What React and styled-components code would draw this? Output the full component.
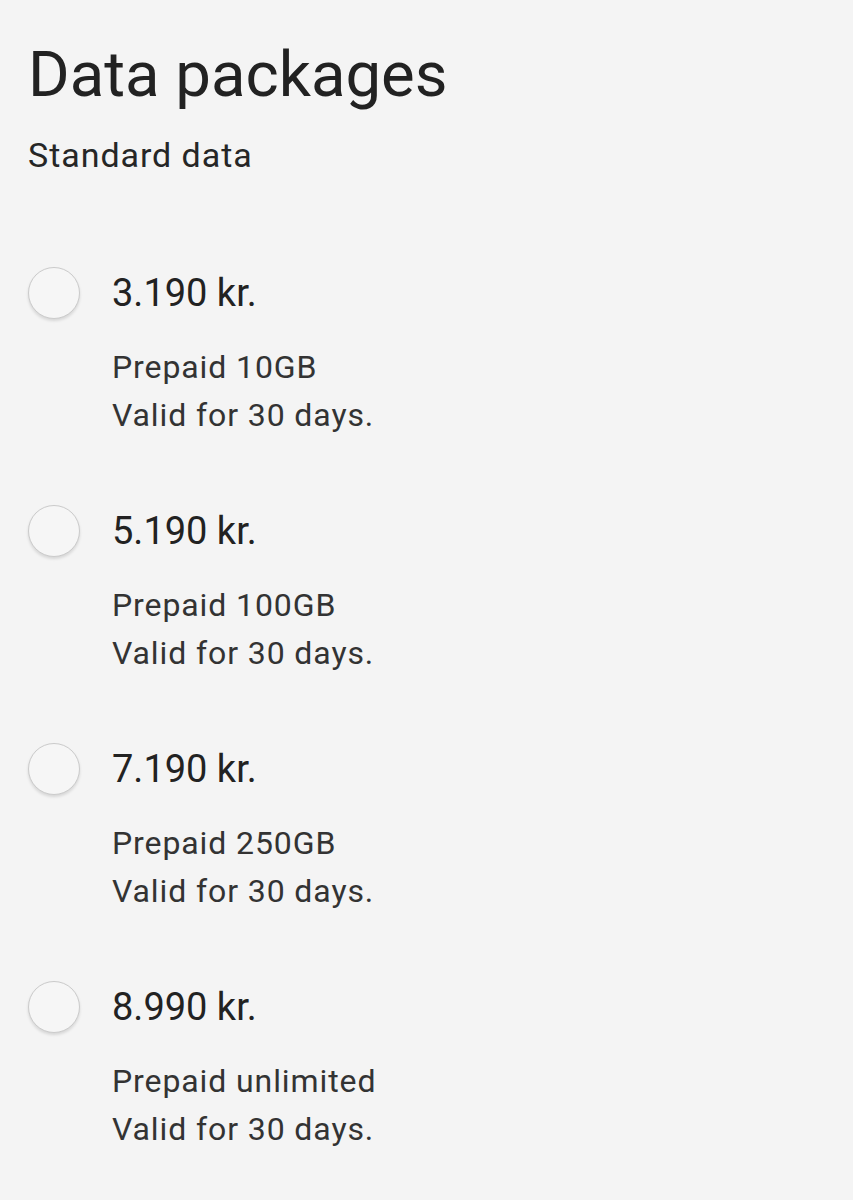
import React from "react";
import styled, { createGlobalStyle } from "styled-components";

const Global = createGlobalStyle`
  body {
    margin: 0;
    background: #f4f4f4;
    font-family: Roboto, "Liberation Sans", sans-serif;
  }
`;

const Page = styled.div`
  padding: 38px 28px 0;
  min-height: 1200px;
  box-sizing: border-box;
  background: #f4f4f4;
`;

const Title = styled.h1`
  margin: 0;
  font-size: 63.5px;
  font-weight: 400;
  line-height: 74px;
  color: #222;
`;

const Subtitle = styled.div`
  margin-top: 23px;
  font-size: 34px;
  letter-spacing: 0.95px;
  line-height: 40px;
  color: #262626;
`;

const List = styled.div`
  margin-top: 92px;
  display: flex;
  flex-direction: column;
  gap: 66px;
`;

const Option = styled.label`
  display: grid;
  grid-template-columns: 52px 1fr;
  column-gap: 32px;
  cursor: pointer;
`;

const Radio = styled.span`
  width: 52px;
  height: 52px;
  box-sizing: border-box;
  border-radius: 50%;
  border: 1.5px solid #cbcbcb;
  background: #f6f6f6;
  box-shadow: 0 2px 3px rgba(0, 0, 0, 0.12);
`;

const Body = styled.div`
  display: flex;
  flex-direction: column;
`;

const Price = styled.div`
  font-size: 38px;
  line-height: 52px;
  color: #222;
`;

const Details = styled.div`
  margin-top: 24px;
  font-size: 32px;
  letter-spacing: 0.9px;
  line-height: 48px;
  color: #333;
`;

const packages = [
  { price: "3.190 kr.", name: "Prepaid 10GB" },
  { price: "5.190 kr.", name: "Prepaid 100GB" },
  { price: "7.190 kr.", name: "Prepaid 250GB" },
  { price: "8.990 kr.", name: "Prepaid unlimited" },
];

const App = () => {
  return (
    <Page>
      <Global />
      <Title>Data packages</Title>
      <Subtitle>Standard data</Subtitle>
      <List>
        {packages.map((p) => (
          <Option key={p.price}>
            <Radio />
            <Body>
              <Price>{p.price}</Price>
              <Details>
                {p.name}
                <br />
                Valid for 30 days.
              </Details>
            </Body>
          </Option>
        ))}
      </List>
    </Page>
  );
};

export default App;
